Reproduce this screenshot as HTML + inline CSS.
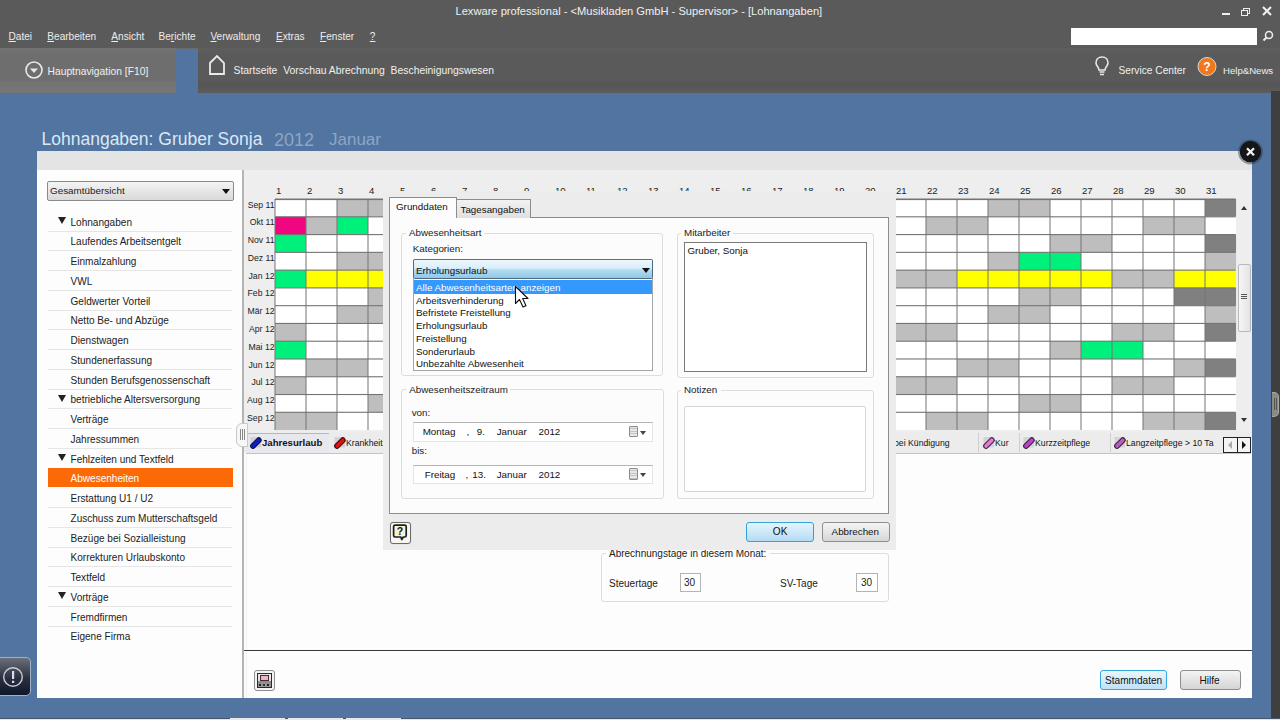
<!DOCTYPE html>
<html><head><meta charset="utf-8">
<style>
*{margin:0;padding:0;box-sizing:border-box}
html,body{width:1280px;height:720px;overflow:hidden}
body{position:relative;background:#5274a0;font-family:"Liberation Sans",sans-serif;font-size:10px;color:#1e1e1e}
.a{position:absolute}
.t{position:absolute;white-space:nowrap;line-height:1}
/* top bars */
#titlebar{left:0;top:0;width:1280px;height:48px;background:#5a5a5a}
#nav1{left:0;top:48px;width:176px;height:45px;background:linear-gradient(#727272,#6e6e6e 15%,#6e6e6e 74%,#747474 75%,#767676)}
#nav2{left:198px;top:48px;width:1082px;height:45px;background:linear-gradient(#5e5e5e,#5a5a5a 15%,#5a5a5a 74%,#555 80%,#5c5c5c)}
.menu{top:32px;font-size:10.1px;color:#ececec}
.menu u{text-decoration:underline;text-underline-offset:1px}
/* main panel */
#panel{left:36.8px;top:151px;width:1215.2px;height:547px;background:#fdfdfd}
#pstrip{left:36.8px;top:151px;width:1215.2px;height:18.8px;background:#e4e4e4}
#calbg{left:244px;top:170px;width:1008px;height:283px;background:#eeeeee}
#split{left:242.2px;top:170px;width:2px;height:528px;background:#b4b4b4;box-shadow:3.5px 0 0 -0.5px #f0f0f0}
.side{left:70.5px;font-size:10.05px;color:#222}
.sep{left:48px;width:184px;height:1px;background:#e6e6e6}
.tri{left:58px;width:0;height:0;border-left:4px solid transparent;border-right:4px solid transparent;border-top:7px solid #222}
.ml{position:absolute;left:240px;width:34.6px;text-align:right;font-size:8.7px;line-height:1;color:#222;white-space:nowrap}
.dn{position:absolute;top:186px;font-size:9.6px;line-height:1;color:#222}
.dl{left:416px;font-size:9.8px;color:#111}
.dt{font-size:9.8px;color:#111}
.calic{left:628.5px;width:9.5px;height:11.5px;border:1px solid #8c8c8c;border-radius:1px;background:repeating-linear-gradient(#e8e8e8 0,#e8e8e8 1.5px,#c4c4c4 1.5px,#c4c4c4 2.5px)}
.calar{left:640px;width:0;height:0;border-left:3.5px solid transparent;border-right:3.5px solid transparent;border-top:4px solid #444}
</style></head><body>
<!-- title & menu -->
<div id="titlebar" class="a"></div>
<div class="a" style="left:0;top:47.5px;width:1280px;height:1px;background:#6a6a6a"></div>
<div class="t" style="left:455.5px;top:5.5px;font-size:11.13px;color:#f0f0f0">Lexware professional - &lt;Musikladen GmbH - Supervisor&gt; - [Lohnangaben]</div>
<div class="t menu" style="left:8.5px"><u>D</u>atei</div>
<div class="t menu" style="left:47.3px"><u>B</u>earbeiten</div>
<div class="t menu" style="left:111.3px"><u>A</u>nsicht</div>
<div class="t menu" style="left:158.5px">Be<u>r</u>ichte</div>
<div class="t menu" style="left:210.4px"><u>V</u>erwaltung</div>
<div class="t menu" style="left:276px"><u>E</u>xtras</div>
<div class="t menu" style="left:320px"><u>F</u>enster</div>
<div class="t menu" style="left:369.8px"><u>?</u></div>
<!-- window controls -->
<div class="a" style="left:1222px;top:13px;width:8px;height:2px;background:#eee"></div>
<div class="a" style="left:1243px;top:8px;width:7px;height:6px;border:1.5px solid #eee"></div>
<div class="a" style="left:1241px;top:10px;width:7px;height:6px;border:1.5px solid #eee;background:#5a5a5a"></div>
<svg class="a" style="left:1262px;top:6px" width="10" height="10"><path d="M1 1L9 9M9 1L1 9" stroke="#f2f2f2" stroke-width="2"/></svg>
<!-- search -->
<div class="a" style="left:1071px;top:27.5px;width:185.5px;height:17.5px;background:#fff"></div>
<svg class="a" style="left:1262px;top:30px" width="12" height="12"><circle cx="7" cy="5" r="3.5" fill="none" stroke="#eee" stroke-width="1.5"/><path d="M4.5 7.5L1.5 10.5" stroke="#eee" stroke-width="2"/></svg>
<!-- nav bar -->
<div id="nav1" class="a"></div>
<div id="nav2" class="a"></div>
<svg class="a" style="left:24px;top:60px" width="20" height="20"><circle cx="10" cy="10" r="8" fill="none" stroke="#e8e8e8" stroke-width="1.6"/><path d="M6 8.5L14 8.5L10 13Z" fill="#e8e8e8"/></svg>
<div class="t" style="left:47.5px;top:66.5px;font-size:10.3px;color:#f0f0f0">Hauptnavigation [F10]</div>
<svg class="a" style="left:208px;top:54px" width="18" height="22"><path d="M2 9L9 2L16 9L16 20L2 20Z" fill="none" stroke="#eaeaea" stroke-width="1.8"/></svg>
<div class="t" style="left:233.5px;top:66px;font-size:10.4px;color:#f0f0f0">Startseite&nbsp; Vorschau Abrechnung&nbsp; Bescheinigungswesen</div>
<svg class="a" style="left:1094px;top:55px" width="16" height="24"><path d="M8 2C4 2 2 5 2 8C2 11 5 12 5 15L11 15C11 12 14 11 14 8C14 5 12 2 8 2Z" fill="none" stroke="#e6e6e6" stroke-width="1.6"/><path d="M5.5 17L10.5 17M6 19.5L10 19.5" stroke="#e6e6e6" stroke-width="1.4"/></svg>
<div class="t" style="left:1118.5px;top:66px;font-size:10.2px;color:#f0f0f0">Service Center</div>
<svg class="a" style="left:1196px;top:56px" width="22" height="22"><circle cx="11" cy="10.5" r="9" fill="#f07818" stroke="#d8d8d8" stroke-width="1"/><text x="11" y="15" text-anchor="middle" font-family="Liberation Sans" font-weight="bold" font-size="12" fill="#fff">?</text></svg>
<div class="t" style="left:1223px;top:66px;font-size:9.6px;color:#f0f0f0">Help&amp;News</div>
<!-- right dark strip -->
<div class="a" style="left:1271px;top:91px;width:9px;height:629px;background:#3f3f3f"></div>
<div class="a" style="left:1271.5px;top:392px;width:7.5px;height:25px;border-radius:0 5px 5px 0;background:#8a8c84;border:1px solid #a8aaa0;border-left:none"></div>
<div class="a" style="left:1273.5px;top:398px;width:1px;height:12px;background:#555;box-shadow:2px 0 0 #555"></div>
<!-- page title -->
<div class="t" style="left:41.5px;top:130.5px;font-size:17.5px;color:#dbe8f6">Lohnangaben: Gruber Sonja</div>
<div class="t" style="left:274px;top:130.5px;font-size:18px;color:#8ea6c6">2012</div>
<div class="t" style="left:329px;top:130.5px;font-size:17px;color:#8ea6c6">Januar</div>
<!-- main panel -->
<div id="panel" class="a"></div>
<div id="pstrip" class="a"></div>
<div id="calbg" class="a"></div>
<div id="split" class="a"></div>
<!-- sidebar -->
<div class="a" style="left:47.2px;top:181.2px;width:186.8px;height:19.5px;border:1px solid #8a8a8a;border-radius:2px;background:linear-gradient(#f4f4f4,#e6e6e6 50%,#d9d9d9)"></div>
<div class="t" style="left:50px;top:186px;font-size:9.9px;color:#1a1a1a">Gesamtübersicht</div>
<div class="a" style="left:222px;top:188.5px;width:0;height:0;border-left:4px solid transparent;border-right:4px solid transparent;border-top:5px solid #111"></div>
<div class="t side" style="top:217.60px">Lohnangaben</div>
<div class="a tri" style="top:217.00px"></div>
<div class="a sep" style="top:230.50px"></div>
<div class="t side" style="top:237.35px">Laufendes Arbeitsentgelt</div>
<div class="a sep" style="top:250.25px"></div>
<div class="t side" style="top:257.10px">Einmalzahlung</div>
<div class="a sep" style="top:270.00px"></div>
<div class="t side" style="top:276.85px">VWL</div>
<div class="a sep" style="top:289.75px"></div>
<div class="t side" style="top:296.60px">Geldwerter Vorteil</div>
<div class="a sep" style="top:309.50px"></div>
<div class="t side" style="top:316.35px">Netto Be- und Abzüge</div>
<div class="a sep" style="top:329.25px"></div>
<div class="t side" style="top:336.10px">Dienstwagen</div>
<div class="a sep" style="top:349.00px"></div>
<div class="t side" style="top:355.85px">Stundenerfassung</div>
<div class="a sep" style="top:368.75px"></div>
<div class="t side" style="top:375.60px">Stunden Berufsgenossenschaft</div>
<div class="a sep" style="top:388.50px"></div>
<div class="t side" style="top:395.35px">betriebliche Altersversorgung</div>
<div class="a tri" style="top:394.75px"></div>
<div class="a sep" style="top:408.25px"></div>
<div class="t side" style="top:415.10px">Verträge</div>
<div class="a sep" style="top:428.00px"></div>
<div class="t side" style="top:434.85px">Jahressummen</div>
<div class="a sep" style="top:447.75px"></div>
<div class="t side" style="top:454.60px">Fehlzeiten und Textfeld</div>
<div class="a tri" style="top:454.00px"></div>
<div class="a" style="left:47.8px;top:467.95px;width:185.7px;height:19.5px;background:#fc6a08"></div>
<div class="t side" style="top:474.35px;color:#fff">Abwesenheiten</div>
<div class="t side" style="top:494.10px">Erstattung U1 / U2</div>
<div class="a sep" style="top:507.00px"></div>
<div class="t side" style="top:513.85px">Zuschuss zum Mutterschaftsgeld</div>
<div class="a sep" style="top:526.75px"></div>
<div class="t side" style="top:533.60px">Bezüge bei Sozialleistung</div>
<div class="a sep" style="top:546.50px"></div>
<div class="t side" style="top:553.35px">Korrekturen Urlaubskonto</div>
<div class="a sep" style="top:566.25px"></div>
<div class="t side" style="top:573.10px">Textfeld</div>
<div class="a sep" style="top:586.00px"></div>
<div class="t side" style="top:592.85px">Vorträge</div>
<div class="a tri" style="top:592.25px"></div>
<div class="a sep" style="top:605.75px"></div>
<div class="t side" style="top:612.60px">Fremdfirmen</div>
<div class="a sep" style="top:625.50px"></div>
<div class="t side" style="top:632.35px">Eigene Firma</div>
<!-- calendar -->
<svg style="position:absolute;left:0;top:0" width="1280" height="720" viewBox="0 0 1280 720">
<rect x="275.00" y="199.00" width="31.05" height="17.82" fill="#ffffff"/>
<rect x="306.00" y="199.00" width="31.05" height="17.82" fill="#ffffff"/>
<rect x="337.00" y="199.00" width="31.05" height="17.82" fill="#bebebe"/>
<rect x="368.00" y="199.00" width="31.05" height="17.82" fill="#bebebe"/>
<rect x="399.00" y="199.00" width="31.05" height="17.82" fill="#ffffff"/>
<rect x="430.00" y="199.00" width="31.05" height="17.82" fill="#ffffff"/>
<rect x="461.00" y="199.00" width="31.05" height="17.82" fill="#ffffff"/>
<rect x="492.00" y="199.00" width="31.05" height="17.82" fill="#ffffff"/>
<rect x="523.00" y="199.00" width="31.05" height="17.82" fill="#ffffff"/>
<rect x="554.00" y="199.00" width="31.05" height="17.82" fill="#bebebe"/>
<rect x="585.00" y="199.00" width="31.05" height="17.82" fill="#bebebe"/>
<rect x="616.00" y="199.00" width="31.05" height="17.82" fill="#ffffff"/>
<rect x="647.00" y="199.00" width="31.05" height="17.82" fill="#ffffff"/>
<rect x="678.00" y="199.00" width="31.05" height="17.82" fill="#ffffff"/>
<rect x="709.00" y="199.00" width="31.05" height="17.82" fill="#ffffff"/>
<rect x="740.00" y="199.00" width="31.05" height="17.82" fill="#ffffff"/>
<rect x="771.00" y="199.00" width="31.05" height="17.82" fill="#bebebe"/>
<rect x="802.00" y="199.00" width="31.05" height="17.82" fill="#bebebe"/>
<rect x="833.00" y="199.00" width="31.05" height="17.82" fill="#ffffff"/>
<rect x="864.00" y="199.00" width="31.05" height="17.82" fill="#ffffff"/>
<rect x="895.00" y="199.00" width="31.05" height="17.82" fill="#ffffff"/>
<rect x="926.00" y="199.00" width="31.05" height="17.82" fill="#ffffff"/>
<rect x="957.00" y="199.00" width="31.05" height="17.82" fill="#ffffff"/>
<rect x="988.00" y="199.00" width="31.05" height="17.82" fill="#bebebe"/>
<rect x="1019.00" y="199.00" width="31.05" height="17.82" fill="#bebebe"/>
<rect x="1050.00" y="199.00" width="31.05" height="17.82" fill="#ffffff"/>
<rect x="1081.00" y="199.00" width="31.05" height="17.82" fill="#ffffff"/>
<rect x="1112.00" y="199.00" width="31.05" height="17.82" fill="#ffffff"/>
<rect x="1143.00" y="199.00" width="31.05" height="17.82" fill="#ffffff"/>
<rect x="1174.00" y="199.00" width="31.05" height="17.82" fill="#ffffff"/>
<rect x="1205.00" y="199.00" width="31.05" height="17.82" fill="#808080"/>
<rect x="275.00" y="216.77" width="31.05" height="17.82" fill="#f0067e"/>
<rect x="306.00" y="216.77" width="31.05" height="17.82" fill="#bebebe"/>
<rect x="337.00" y="216.77" width="31.05" height="17.82" fill="#00f07c"/>
<rect x="368.00" y="216.77" width="31.05" height="17.82" fill="#ffffff"/>
<rect x="399.00" y="216.77" width="31.05" height="17.82" fill="#ffffff"/>
<rect x="430.00" y="216.77" width="31.05" height="17.82" fill="#ffffff"/>
<rect x="461.00" y="216.77" width="31.05" height="17.82" fill="#ffffff"/>
<rect x="492.00" y="216.77" width="31.05" height="17.82" fill="#bebebe"/>
<rect x="523.00" y="216.77" width="31.05" height="17.82" fill="#bebebe"/>
<rect x="554.00" y="216.77" width="31.05" height="17.82" fill="#ffffff"/>
<rect x="585.00" y="216.77" width="31.05" height="17.82" fill="#ffffff"/>
<rect x="616.00" y="216.77" width="31.05" height="17.82" fill="#ffffff"/>
<rect x="647.00" y="216.77" width="31.05" height="17.82" fill="#ffffff"/>
<rect x="678.00" y="216.77" width="31.05" height="17.82" fill="#ffffff"/>
<rect x="709.00" y="216.77" width="31.05" height="17.82" fill="#bebebe"/>
<rect x="740.00" y="216.77" width="31.05" height="17.82" fill="#bebebe"/>
<rect x="771.00" y="216.77" width="31.05" height="17.82" fill="#ffffff"/>
<rect x="802.00" y="216.77" width="31.05" height="17.82" fill="#ffffff"/>
<rect x="833.00" y="216.77" width="31.05" height="17.82" fill="#ffffff"/>
<rect x="864.00" y="216.77" width="31.05" height="17.82" fill="#ffffff"/>
<rect x="895.00" y="216.77" width="31.05" height="17.82" fill="#ffffff"/>
<rect x="926.00" y="216.77" width="31.05" height="17.82" fill="#bebebe"/>
<rect x="957.00" y="216.77" width="31.05" height="17.82" fill="#bebebe"/>
<rect x="988.00" y="216.77" width="31.05" height="17.82" fill="#ffffff"/>
<rect x="1019.00" y="216.77" width="31.05" height="17.82" fill="#ffffff"/>
<rect x="1050.00" y="216.77" width="31.05" height="17.82" fill="#ffffff"/>
<rect x="1081.00" y="216.77" width="31.05" height="17.82" fill="#ffffff"/>
<rect x="1112.00" y="216.77" width="31.05" height="17.82" fill="#ffffff"/>
<rect x="1143.00" y="216.77" width="31.05" height="17.82" fill="#bebebe"/>
<rect x="1174.00" y="216.77" width="31.05" height="17.82" fill="#bebebe"/>
<rect x="1205.00" y="216.77" width="31.05" height="17.82" fill="#ffffff"/>
<rect x="275.00" y="234.54" width="31.05" height="17.82" fill="#00f07c"/>
<rect x="306.00" y="234.54" width="31.05" height="17.82" fill="#ffffff"/>
<rect x="337.00" y="234.54" width="31.05" height="17.82" fill="#ffffff"/>
<rect x="368.00" y="234.54" width="31.05" height="17.82" fill="#ffffff"/>
<rect x="399.00" y="234.54" width="31.05" height="17.82" fill="#bebebe"/>
<rect x="430.00" y="234.54" width="31.05" height="17.82" fill="#bebebe"/>
<rect x="461.00" y="234.54" width="31.05" height="17.82" fill="#ffffff"/>
<rect x="492.00" y="234.54" width="31.05" height="17.82" fill="#ffffff"/>
<rect x="523.00" y="234.54" width="31.05" height="17.82" fill="#ffffff"/>
<rect x="554.00" y="234.54" width="31.05" height="17.82" fill="#ffffff"/>
<rect x="585.00" y="234.54" width="31.05" height="17.82" fill="#ffffff"/>
<rect x="616.00" y="234.54" width="31.05" height="17.82" fill="#bebebe"/>
<rect x="647.00" y="234.54" width="31.05" height="17.82" fill="#bebebe"/>
<rect x="678.00" y="234.54" width="31.05" height="17.82" fill="#ffffff"/>
<rect x="709.00" y="234.54" width="31.05" height="17.82" fill="#ffffff"/>
<rect x="740.00" y="234.54" width="31.05" height="17.82" fill="#ffffff"/>
<rect x="771.00" y="234.54" width="31.05" height="17.82" fill="#ffffff"/>
<rect x="802.00" y="234.54" width="31.05" height="17.82" fill="#ffffff"/>
<rect x="833.00" y="234.54" width="31.05" height="17.82" fill="#bebebe"/>
<rect x="864.00" y="234.54" width="31.05" height="17.82" fill="#bebebe"/>
<rect x="895.00" y="234.54" width="31.05" height="17.82" fill="#ffffff"/>
<rect x="926.00" y="234.54" width="31.05" height="17.82" fill="#ffffff"/>
<rect x="957.00" y="234.54" width="31.05" height="17.82" fill="#ffffff"/>
<rect x="988.00" y="234.54" width="31.05" height="17.82" fill="#ffffff"/>
<rect x="1019.00" y="234.54" width="31.05" height="17.82" fill="#ffffff"/>
<rect x="1050.00" y="234.54" width="31.05" height="17.82" fill="#bebebe"/>
<rect x="1081.00" y="234.54" width="31.05" height="17.82" fill="#bebebe"/>
<rect x="1112.00" y="234.54" width="31.05" height="17.82" fill="#ffffff"/>
<rect x="1143.00" y="234.54" width="31.05" height="17.82" fill="#ffffff"/>
<rect x="1174.00" y="234.54" width="31.05" height="17.82" fill="#ffffff"/>
<rect x="1205.00" y="234.54" width="31.05" height="17.82" fill="#808080"/>
<rect x="275.00" y="252.31" width="31.05" height="17.82" fill="#ffffff"/>
<rect x="306.00" y="252.31" width="31.05" height="17.82" fill="#ffffff"/>
<rect x="337.00" y="252.31" width="31.05" height="17.82" fill="#bebebe"/>
<rect x="368.00" y="252.31" width="31.05" height="17.82" fill="#bebebe"/>
<rect x="399.00" y="252.31" width="31.05" height="17.82" fill="#ffffff"/>
<rect x="430.00" y="252.31" width="31.05" height="17.82" fill="#ffffff"/>
<rect x="461.00" y="252.31" width="31.05" height="17.82" fill="#ffffff"/>
<rect x="492.00" y="252.31" width="31.05" height="17.82" fill="#ffffff"/>
<rect x="523.00" y="252.31" width="31.05" height="17.82" fill="#ffffff"/>
<rect x="554.00" y="252.31" width="31.05" height="17.82" fill="#bebebe"/>
<rect x="585.00" y="252.31" width="31.05" height="17.82" fill="#bebebe"/>
<rect x="616.00" y="252.31" width="31.05" height="17.82" fill="#ffffff"/>
<rect x="647.00" y="252.31" width="31.05" height="17.82" fill="#ffffff"/>
<rect x="678.00" y="252.31" width="31.05" height="17.82" fill="#ffffff"/>
<rect x="709.00" y="252.31" width="31.05" height="17.82" fill="#ffffff"/>
<rect x="740.00" y="252.31" width="31.05" height="17.82" fill="#ffffff"/>
<rect x="771.00" y="252.31" width="31.05" height="17.82" fill="#bebebe"/>
<rect x="802.00" y="252.31" width="31.05" height="17.82" fill="#bebebe"/>
<rect x="833.00" y="252.31" width="31.05" height="17.82" fill="#ffffff"/>
<rect x="864.00" y="252.31" width="31.05" height="17.82" fill="#ffffff"/>
<rect x="895.00" y="252.31" width="31.05" height="17.82" fill="#ffffff"/>
<rect x="926.00" y="252.31" width="31.05" height="17.82" fill="#ffffff"/>
<rect x="957.00" y="252.31" width="31.05" height="17.82" fill="#ffffff"/>
<rect x="988.00" y="252.31" width="31.05" height="17.82" fill="#bebebe"/>
<rect x="1019.00" y="252.31" width="31.05" height="17.82" fill="#00f07c"/>
<rect x="1050.00" y="252.31" width="31.05" height="17.82" fill="#00f07c"/>
<rect x="1081.00" y="252.31" width="31.05" height="17.82" fill="#ffffff"/>
<rect x="1112.00" y="252.31" width="31.05" height="17.82" fill="#ffffff"/>
<rect x="1143.00" y="252.31" width="31.05" height="17.82" fill="#ffffff"/>
<rect x="1174.00" y="252.31" width="31.05" height="17.82" fill="#ffffff"/>
<rect x="1205.00" y="252.31" width="31.05" height="17.82" fill="#bebebe"/>
<rect x="275.00" y="270.08" width="31.05" height="17.82" fill="#00f07c"/>
<rect x="306.00" y="270.08" width="31.05" height="17.82" fill="#ffff00"/>
<rect x="337.00" y="270.08" width="31.05" height="17.82" fill="#ffff00"/>
<rect x="368.00" y="270.08" width="31.05" height="17.82" fill="#ffff00"/>
<rect x="399.00" y="270.08" width="31.05" height="17.82" fill="#ffff00"/>
<rect x="430.00" y="270.08" width="31.05" height="17.82" fill="#ffff00"/>
<rect x="461.00" y="270.08" width="31.05" height="17.82" fill="#bebebe"/>
<rect x="492.00" y="270.08" width="31.05" height="17.82" fill="#bebebe"/>
<rect x="523.00" y="270.08" width="31.05" height="17.82" fill="#ffff00"/>
<rect x="554.00" y="270.08" width="31.05" height="17.82" fill="#ffff00"/>
<rect x="585.00" y="270.08" width="31.05" height="17.82" fill="#ffff00"/>
<rect x="616.00" y="270.08" width="31.05" height="17.82" fill="#ffff00"/>
<rect x="647.00" y="270.08" width="31.05" height="17.82" fill="#ffff00"/>
<rect x="678.00" y="270.08" width="31.05" height="17.82" fill="#bebebe"/>
<rect x="709.00" y="270.08" width="31.05" height="17.82" fill="#bebebe"/>
<rect x="740.00" y="270.08" width="31.05" height="17.82" fill="#ffff00"/>
<rect x="771.00" y="270.08" width="31.05" height="17.82" fill="#ffff00"/>
<rect x="802.00" y="270.08" width="31.05" height="17.82" fill="#ffff00"/>
<rect x="833.00" y="270.08" width="31.05" height="17.82" fill="#ffff00"/>
<rect x="864.00" y="270.08" width="31.05" height="17.82" fill="#ffff00"/>
<rect x="895.00" y="270.08" width="31.05" height="17.82" fill="#bebebe"/>
<rect x="926.00" y="270.08" width="31.05" height="17.82" fill="#bebebe"/>
<rect x="957.00" y="270.08" width="31.05" height="17.82" fill="#ffff00"/>
<rect x="988.00" y="270.08" width="31.05" height="17.82" fill="#ffff00"/>
<rect x="1019.00" y="270.08" width="31.05" height="17.82" fill="#ffff00"/>
<rect x="1050.00" y="270.08" width="31.05" height="17.82" fill="#ffff00"/>
<rect x="1081.00" y="270.08" width="31.05" height="17.82" fill="#ffff00"/>
<rect x="1112.00" y="270.08" width="31.05" height="17.82" fill="#bebebe"/>
<rect x="1143.00" y="270.08" width="31.05" height="17.82" fill="#bebebe"/>
<rect x="1174.00" y="270.08" width="31.05" height="17.82" fill="#ffff00"/>
<rect x="1205.00" y="270.08" width="31.05" height="17.82" fill="#ffff00"/>
<rect x="275.00" y="287.85" width="31.05" height="17.82" fill="#ffffff"/>
<rect x="306.00" y="287.85" width="31.05" height="17.82" fill="#ffffff"/>
<rect x="337.00" y="287.85" width="31.05" height="17.82" fill="#ffffff"/>
<rect x="368.00" y="287.85" width="31.05" height="17.82" fill="#bebebe"/>
<rect x="399.00" y="287.85" width="31.05" height="17.82" fill="#bebebe"/>
<rect x="430.00" y="287.85" width="31.05" height="17.82" fill="#ffffff"/>
<rect x="461.00" y="287.85" width="31.05" height="17.82" fill="#ffffff"/>
<rect x="492.00" y="287.85" width="31.05" height="17.82" fill="#ffffff"/>
<rect x="523.00" y="287.85" width="31.05" height="17.82" fill="#ffffff"/>
<rect x="554.00" y="287.85" width="31.05" height="17.82" fill="#ffffff"/>
<rect x="585.00" y="287.85" width="31.05" height="17.82" fill="#bebebe"/>
<rect x="616.00" y="287.85" width="31.05" height="17.82" fill="#bebebe"/>
<rect x="647.00" y="287.85" width="31.05" height="17.82" fill="#ffffff"/>
<rect x="678.00" y="287.85" width="31.05" height="17.82" fill="#ffffff"/>
<rect x="709.00" y="287.85" width="31.05" height="17.82" fill="#ffffff"/>
<rect x="740.00" y="287.85" width="31.05" height="17.82" fill="#ffffff"/>
<rect x="771.00" y="287.85" width="31.05" height="17.82" fill="#ffffff"/>
<rect x="802.00" y="287.85" width="31.05" height="17.82" fill="#bebebe"/>
<rect x="833.00" y="287.85" width="31.05" height="17.82" fill="#bebebe"/>
<rect x="864.00" y="287.85" width="31.05" height="17.82" fill="#ffffff"/>
<rect x="895.00" y="287.85" width="31.05" height="17.82" fill="#ffffff"/>
<rect x="926.00" y="287.85" width="31.05" height="17.82" fill="#ffffff"/>
<rect x="957.00" y="287.85" width="31.05" height="17.82" fill="#ffffff"/>
<rect x="988.00" y="287.85" width="31.05" height="17.82" fill="#ffffff"/>
<rect x="1019.00" y="287.85" width="31.05" height="17.82" fill="#bebebe"/>
<rect x="1050.00" y="287.85" width="31.05" height="17.82" fill="#bebebe"/>
<rect x="1081.00" y="287.85" width="31.05" height="17.82" fill="#ffffff"/>
<rect x="1112.00" y="287.85" width="31.05" height="17.82" fill="#ffffff"/>
<rect x="1143.00" y="287.85" width="31.05" height="17.82" fill="#ffffff"/>
<rect x="1174.00" y="287.85" width="31.05" height="17.82" fill="#808080"/>
<rect x="1205.00" y="287.85" width="31.05" height="17.82" fill="#808080"/>
<rect x="275.00" y="305.62" width="31.05" height="17.82" fill="#ffffff"/>
<rect x="306.00" y="305.62" width="31.05" height="17.82" fill="#ffffff"/>
<rect x="337.00" y="305.62" width="31.05" height="17.82" fill="#bebebe"/>
<rect x="368.00" y="305.62" width="31.05" height="17.82" fill="#bebebe"/>
<rect x="399.00" y="305.62" width="31.05" height="17.82" fill="#ffffff"/>
<rect x="430.00" y="305.62" width="31.05" height="17.82" fill="#ffffff"/>
<rect x="461.00" y="305.62" width="31.05" height="17.82" fill="#ffffff"/>
<rect x="492.00" y="305.62" width="31.05" height="17.82" fill="#ffffff"/>
<rect x="523.00" y="305.62" width="31.05" height="17.82" fill="#ffffff"/>
<rect x="554.00" y="305.62" width="31.05" height="17.82" fill="#bebebe"/>
<rect x="585.00" y="305.62" width="31.05" height="17.82" fill="#bebebe"/>
<rect x="616.00" y="305.62" width="31.05" height="17.82" fill="#ffffff"/>
<rect x="647.00" y="305.62" width="31.05" height="17.82" fill="#ffffff"/>
<rect x="678.00" y="305.62" width="31.05" height="17.82" fill="#ffffff"/>
<rect x="709.00" y="305.62" width="31.05" height="17.82" fill="#ffffff"/>
<rect x="740.00" y="305.62" width="31.05" height="17.82" fill="#ffffff"/>
<rect x="771.00" y="305.62" width="31.05" height="17.82" fill="#bebebe"/>
<rect x="802.00" y="305.62" width="31.05" height="17.82" fill="#bebebe"/>
<rect x="833.00" y="305.62" width="31.05" height="17.82" fill="#ffffff"/>
<rect x="864.00" y="305.62" width="31.05" height="17.82" fill="#ffffff"/>
<rect x="895.00" y="305.62" width="31.05" height="17.82" fill="#ffffff"/>
<rect x="926.00" y="305.62" width="31.05" height="17.82" fill="#ffffff"/>
<rect x="957.00" y="305.62" width="31.05" height="17.82" fill="#ffffff"/>
<rect x="988.00" y="305.62" width="31.05" height="17.82" fill="#bebebe"/>
<rect x="1019.00" y="305.62" width="31.05" height="17.82" fill="#bebebe"/>
<rect x="1050.00" y="305.62" width="31.05" height="17.82" fill="#ffffff"/>
<rect x="1081.00" y="305.62" width="31.05" height="17.82" fill="#ffffff"/>
<rect x="1112.00" y="305.62" width="31.05" height="17.82" fill="#ffffff"/>
<rect x="1143.00" y="305.62" width="31.05" height="17.82" fill="#ffffff"/>
<rect x="1174.00" y="305.62" width="31.05" height="17.82" fill="#ffffff"/>
<rect x="1205.00" y="305.62" width="31.05" height="17.82" fill="#bebebe"/>
<rect x="275.00" y="323.39" width="31.05" height="17.82" fill="#bebebe"/>
<rect x="306.00" y="323.39" width="31.05" height="17.82" fill="#ffffff"/>
<rect x="337.00" y="323.39" width="31.05" height="17.82" fill="#ffffff"/>
<rect x="368.00" y="323.39" width="31.05" height="17.82" fill="#ffffff"/>
<rect x="399.00" y="323.39" width="31.05" height="17.82" fill="#ffffff"/>
<rect x="430.00" y="323.39" width="31.05" height="17.82" fill="#ffffff"/>
<rect x="461.00" y="323.39" width="31.05" height="17.82" fill="#bebebe"/>
<rect x="492.00" y="323.39" width="31.05" height="17.82" fill="#bebebe"/>
<rect x="523.00" y="323.39" width="31.05" height="17.82" fill="#ffffff"/>
<rect x="554.00" y="323.39" width="31.05" height="17.82" fill="#ffffff"/>
<rect x="585.00" y="323.39" width="31.05" height="17.82" fill="#ffffff"/>
<rect x="616.00" y="323.39" width="31.05" height="17.82" fill="#ffffff"/>
<rect x="647.00" y="323.39" width="31.05" height="17.82" fill="#ffffff"/>
<rect x="678.00" y="323.39" width="31.05" height="17.82" fill="#bebebe"/>
<rect x="709.00" y="323.39" width="31.05" height="17.82" fill="#bebebe"/>
<rect x="740.00" y="323.39" width="31.05" height="17.82" fill="#ffffff"/>
<rect x="771.00" y="323.39" width="31.05" height="17.82" fill="#ffffff"/>
<rect x="802.00" y="323.39" width="31.05" height="17.82" fill="#ffffff"/>
<rect x="833.00" y="323.39" width="31.05" height="17.82" fill="#ffffff"/>
<rect x="864.00" y="323.39" width="31.05" height="17.82" fill="#ffffff"/>
<rect x="895.00" y="323.39" width="31.05" height="17.82" fill="#bebebe"/>
<rect x="926.00" y="323.39" width="31.05" height="17.82" fill="#bebebe"/>
<rect x="957.00" y="323.39" width="31.05" height="17.82" fill="#ffffff"/>
<rect x="988.00" y="323.39" width="31.05" height="17.82" fill="#ffffff"/>
<rect x="1019.00" y="323.39" width="31.05" height="17.82" fill="#ffffff"/>
<rect x="1050.00" y="323.39" width="31.05" height="17.82" fill="#ffffff"/>
<rect x="1081.00" y="323.39" width="31.05" height="17.82" fill="#ffffff"/>
<rect x="1112.00" y="323.39" width="31.05" height="17.82" fill="#bebebe"/>
<rect x="1143.00" y="323.39" width="31.05" height="17.82" fill="#bebebe"/>
<rect x="1174.00" y="323.39" width="31.05" height="17.82" fill="#ffffff"/>
<rect x="1205.00" y="323.39" width="31.05" height="17.82" fill="#808080"/>
<rect x="275.00" y="341.16" width="31.05" height="17.82" fill="#00f07c"/>
<rect x="306.00" y="341.16" width="31.05" height="17.82" fill="#ffffff"/>
<rect x="337.00" y="341.16" width="31.05" height="17.82" fill="#ffffff"/>
<rect x="368.00" y="341.16" width="31.05" height="17.82" fill="#ffffff"/>
<rect x="399.00" y="341.16" width="31.05" height="17.82" fill="#bebebe"/>
<rect x="430.00" y="341.16" width="31.05" height="17.82" fill="#bebebe"/>
<rect x="461.00" y="341.16" width="31.05" height="17.82" fill="#ffffff"/>
<rect x="492.00" y="341.16" width="31.05" height="17.82" fill="#ffffff"/>
<rect x="523.00" y="341.16" width="31.05" height="17.82" fill="#ffffff"/>
<rect x="554.00" y="341.16" width="31.05" height="17.82" fill="#ffffff"/>
<rect x="585.00" y="341.16" width="31.05" height="17.82" fill="#ffffff"/>
<rect x="616.00" y="341.16" width="31.05" height="17.82" fill="#bebebe"/>
<rect x="647.00" y="341.16" width="31.05" height="17.82" fill="#bebebe"/>
<rect x="678.00" y="341.16" width="31.05" height="17.82" fill="#ffffff"/>
<rect x="709.00" y="341.16" width="31.05" height="17.82" fill="#ffffff"/>
<rect x="740.00" y="341.16" width="31.05" height="17.82" fill="#ffffff"/>
<rect x="771.00" y="341.16" width="31.05" height="17.82" fill="#ffffff"/>
<rect x="802.00" y="341.16" width="31.05" height="17.82" fill="#ffffff"/>
<rect x="833.00" y="341.16" width="31.05" height="17.82" fill="#bebebe"/>
<rect x="864.00" y="341.16" width="31.05" height="17.82" fill="#bebebe"/>
<rect x="895.00" y="341.16" width="31.05" height="17.82" fill="#ffffff"/>
<rect x="926.00" y="341.16" width="31.05" height="17.82" fill="#ffffff"/>
<rect x="957.00" y="341.16" width="31.05" height="17.82" fill="#ffffff"/>
<rect x="988.00" y="341.16" width="31.05" height="17.82" fill="#ffffff"/>
<rect x="1019.00" y="341.16" width="31.05" height="17.82" fill="#ffffff"/>
<rect x="1050.00" y="341.16" width="31.05" height="17.82" fill="#bebebe"/>
<rect x="1081.00" y="341.16" width="31.05" height="17.82" fill="#00f07c"/>
<rect x="1112.00" y="341.16" width="31.05" height="17.82" fill="#00f07c"/>
<rect x="1143.00" y="341.16" width="31.05" height="17.82" fill="#ffffff"/>
<rect x="1174.00" y="341.16" width="31.05" height="17.82" fill="#ffffff"/>
<rect x="1205.00" y="341.16" width="31.05" height="17.82" fill="#ffffff"/>
<rect x="275.00" y="358.93" width="31.05" height="17.82" fill="#ffffff"/>
<rect x="306.00" y="358.93" width="31.05" height="17.82" fill="#bebebe"/>
<rect x="337.00" y="358.93" width="31.05" height="17.82" fill="#bebebe"/>
<rect x="368.00" y="358.93" width="31.05" height="17.82" fill="#ffffff"/>
<rect x="399.00" y="358.93" width="31.05" height="17.82" fill="#ffffff"/>
<rect x="430.00" y="358.93" width="31.05" height="17.82" fill="#ffffff"/>
<rect x="461.00" y="358.93" width="31.05" height="17.82" fill="#ffffff"/>
<rect x="492.00" y="358.93" width="31.05" height="17.82" fill="#ffffff"/>
<rect x="523.00" y="358.93" width="31.05" height="17.82" fill="#bebebe"/>
<rect x="554.00" y="358.93" width="31.05" height="17.82" fill="#bebebe"/>
<rect x="585.00" y="358.93" width="31.05" height="17.82" fill="#ffffff"/>
<rect x="616.00" y="358.93" width="31.05" height="17.82" fill="#ffffff"/>
<rect x="647.00" y="358.93" width="31.05" height="17.82" fill="#ffffff"/>
<rect x="678.00" y="358.93" width="31.05" height="17.82" fill="#ffffff"/>
<rect x="709.00" y="358.93" width="31.05" height="17.82" fill="#ffffff"/>
<rect x="740.00" y="358.93" width="31.05" height="17.82" fill="#bebebe"/>
<rect x="771.00" y="358.93" width="31.05" height="17.82" fill="#bebebe"/>
<rect x="802.00" y="358.93" width="31.05" height="17.82" fill="#ffffff"/>
<rect x="833.00" y="358.93" width="31.05" height="17.82" fill="#ffffff"/>
<rect x="864.00" y="358.93" width="31.05" height="17.82" fill="#ffffff"/>
<rect x="895.00" y="358.93" width="31.05" height="17.82" fill="#ffffff"/>
<rect x="926.00" y="358.93" width="31.05" height="17.82" fill="#ffffff"/>
<rect x="957.00" y="358.93" width="31.05" height="17.82" fill="#bebebe"/>
<rect x="988.00" y="358.93" width="31.05" height="17.82" fill="#bebebe"/>
<rect x="1019.00" y="358.93" width="31.05" height="17.82" fill="#ffffff"/>
<rect x="1050.00" y="358.93" width="31.05" height="17.82" fill="#ffffff"/>
<rect x="1081.00" y="358.93" width="31.05" height="17.82" fill="#ffffff"/>
<rect x="1112.00" y="358.93" width="31.05" height="17.82" fill="#ffffff"/>
<rect x="1143.00" y="358.93" width="31.05" height="17.82" fill="#ffffff"/>
<rect x="1174.00" y="358.93" width="31.05" height="17.82" fill="#bebebe"/>
<rect x="1205.00" y="358.93" width="31.05" height="17.82" fill="#808080"/>
<rect x="275.00" y="376.70" width="31.05" height="17.82" fill="#bebebe"/>
<rect x="306.00" y="376.70" width="31.05" height="17.82" fill="#ffffff"/>
<rect x="337.00" y="376.70" width="31.05" height="17.82" fill="#ffffff"/>
<rect x="368.00" y="376.70" width="31.05" height="17.82" fill="#ffffff"/>
<rect x="399.00" y="376.70" width="31.05" height="17.82" fill="#ffffff"/>
<rect x="430.00" y="376.70" width="31.05" height="17.82" fill="#ffffff"/>
<rect x="461.00" y="376.70" width="31.05" height="17.82" fill="#bebebe"/>
<rect x="492.00" y="376.70" width="31.05" height="17.82" fill="#bebebe"/>
<rect x="523.00" y="376.70" width="31.05" height="17.82" fill="#ffffff"/>
<rect x="554.00" y="376.70" width="31.05" height="17.82" fill="#ffffff"/>
<rect x="585.00" y="376.70" width="31.05" height="17.82" fill="#ffffff"/>
<rect x="616.00" y="376.70" width="31.05" height="17.82" fill="#ffffff"/>
<rect x="647.00" y="376.70" width="31.05" height="17.82" fill="#ffffff"/>
<rect x="678.00" y="376.70" width="31.05" height="17.82" fill="#bebebe"/>
<rect x="709.00" y="376.70" width="31.05" height="17.82" fill="#bebebe"/>
<rect x="740.00" y="376.70" width="31.05" height="17.82" fill="#ffffff"/>
<rect x="771.00" y="376.70" width="31.05" height="17.82" fill="#ffffff"/>
<rect x="802.00" y="376.70" width="31.05" height="17.82" fill="#ffffff"/>
<rect x="833.00" y="376.70" width="31.05" height="17.82" fill="#ffffff"/>
<rect x="864.00" y="376.70" width="31.05" height="17.82" fill="#ffffff"/>
<rect x="895.00" y="376.70" width="31.05" height="17.82" fill="#bebebe"/>
<rect x="926.00" y="376.70" width="31.05" height="17.82" fill="#bebebe"/>
<rect x="957.00" y="376.70" width="31.05" height="17.82" fill="#ffffff"/>
<rect x="988.00" y="376.70" width="31.05" height="17.82" fill="#ffffff"/>
<rect x="1019.00" y="376.70" width="31.05" height="17.82" fill="#ffffff"/>
<rect x="1050.00" y="376.70" width="31.05" height="17.82" fill="#ffffff"/>
<rect x="1081.00" y="376.70" width="31.05" height="17.82" fill="#ffffff"/>
<rect x="1112.00" y="376.70" width="31.05" height="17.82" fill="#bebebe"/>
<rect x="1143.00" y="376.70" width="31.05" height="17.82" fill="#bebebe"/>
<rect x="1174.00" y="376.70" width="31.05" height="17.82" fill="#ffffff"/>
<rect x="1205.00" y="376.70" width="31.05" height="17.82" fill="#ffffff"/>
<rect x="275.00" y="394.47" width="31.05" height="17.82" fill="#ffffff"/>
<rect x="306.00" y="394.47" width="31.05" height="17.82" fill="#ffffff"/>
<rect x="337.00" y="394.47" width="31.05" height="17.82" fill="#ffffff"/>
<rect x="368.00" y="394.47" width="31.05" height="17.82" fill="#bebebe"/>
<rect x="399.00" y="394.47" width="31.05" height="17.82" fill="#bebebe"/>
<rect x="430.00" y="394.47" width="31.05" height="17.82" fill="#ffffff"/>
<rect x="461.00" y="394.47" width="31.05" height="17.82" fill="#ffffff"/>
<rect x="492.00" y="394.47" width="31.05" height="17.82" fill="#ffffff"/>
<rect x="523.00" y="394.47" width="31.05" height="17.82" fill="#ffffff"/>
<rect x="554.00" y="394.47" width="31.05" height="17.82" fill="#ffffff"/>
<rect x="585.00" y="394.47" width="31.05" height="17.82" fill="#bebebe"/>
<rect x="616.00" y="394.47" width="31.05" height="17.82" fill="#bebebe"/>
<rect x="647.00" y="394.47" width="31.05" height="17.82" fill="#ffffff"/>
<rect x="678.00" y="394.47" width="31.05" height="17.82" fill="#ffffff"/>
<rect x="709.00" y="394.47" width="31.05" height="17.82" fill="#ffffff"/>
<rect x="740.00" y="394.47" width="31.05" height="17.82" fill="#ffffff"/>
<rect x="771.00" y="394.47" width="31.05" height="17.82" fill="#ffffff"/>
<rect x="802.00" y="394.47" width="31.05" height="17.82" fill="#bebebe"/>
<rect x="833.00" y="394.47" width="31.05" height="17.82" fill="#bebebe"/>
<rect x="864.00" y="394.47" width="31.05" height="17.82" fill="#ffffff"/>
<rect x="895.00" y="394.47" width="31.05" height="17.82" fill="#ffffff"/>
<rect x="926.00" y="394.47" width="31.05" height="17.82" fill="#ffffff"/>
<rect x="957.00" y="394.47" width="31.05" height="17.82" fill="#ffffff"/>
<rect x="988.00" y="394.47" width="31.05" height="17.82" fill="#ffffff"/>
<rect x="1019.00" y="394.47" width="31.05" height="17.82" fill="#bebebe"/>
<rect x="1050.00" y="394.47" width="31.05" height="17.82" fill="#bebebe"/>
<rect x="1081.00" y="394.47" width="31.05" height="17.82" fill="#ffffff"/>
<rect x="1112.00" y="394.47" width="31.05" height="17.82" fill="#ffffff"/>
<rect x="1143.00" y="394.47" width="31.05" height="17.82" fill="#ffffff"/>
<rect x="1174.00" y="394.47" width="31.05" height="17.82" fill="#ffffff"/>
<rect x="1205.00" y="394.47" width="31.05" height="17.82" fill="#ffffff"/>
<rect x="275.00" y="412.24" width="31.05" height="17.82" fill="#bebebe"/>
<rect x="306.00" y="412.24" width="31.05" height="17.82" fill="#bebebe"/>
<rect x="337.00" y="412.24" width="31.05" height="17.82" fill="#ffffff"/>
<rect x="368.00" y="412.24" width="31.05" height="17.82" fill="#ffffff"/>
<rect x="399.00" y="412.24" width="31.05" height="17.82" fill="#ffffff"/>
<rect x="430.00" y="412.24" width="31.05" height="17.82" fill="#ffffff"/>
<rect x="461.00" y="412.24" width="31.05" height="17.82" fill="#ffffff"/>
<rect x="492.00" y="412.24" width="31.05" height="17.82" fill="#bebebe"/>
<rect x="523.00" y="412.24" width="31.05" height="17.82" fill="#bebebe"/>
<rect x="554.00" y="412.24" width="31.05" height="17.82" fill="#ffffff"/>
<rect x="585.00" y="412.24" width="31.05" height="17.82" fill="#ffffff"/>
<rect x="616.00" y="412.24" width="31.05" height="17.82" fill="#ffffff"/>
<rect x="647.00" y="412.24" width="31.05" height="17.82" fill="#ffffff"/>
<rect x="678.00" y="412.24" width="31.05" height="17.82" fill="#ffffff"/>
<rect x="709.00" y="412.24" width="31.05" height="17.82" fill="#bebebe"/>
<rect x="740.00" y="412.24" width="31.05" height="17.82" fill="#bebebe"/>
<rect x="771.00" y="412.24" width="31.05" height="17.82" fill="#ffffff"/>
<rect x="802.00" y="412.24" width="31.05" height="17.82" fill="#ffffff"/>
<rect x="833.00" y="412.24" width="31.05" height="17.82" fill="#ffffff"/>
<rect x="864.00" y="412.24" width="31.05" height="17.82" fill="#ffffff"/>
<rect x="895.00" y="412.24" width="31.05" height="17.82" fill="#ffffff"/>
<rect x="926.00" y="412.24" width="31.05" height="17.82" fill="#bebebe"/>
<rect x="957.00" y="412.24" width="31.05" height="17.82" fill="#bebebe"/>
<rect x="988.00" y="412.24" width="31.05" height="17.82" fill="#ffffff"/>
<rect x="1019.00" y="412.24" width="31.05" height="17.82" fill="#ffffff"/>
<rect x="1050.00" y="412.24" width="31.05" height="17.82" fill="#ffffff"/>
<rect x="1081.00" y="412.24" width="31.05" height="17.82" fill="#ffffff"/>
<rect x="1112.00" y="412.24" width="31.05" height="17.82" fill="#ffffff"/>
<rect x="1143.00" y="412.24" width="31.05" height="17.82" fill="#bebebe"/>
<rect x="1174.00" y="412.24" width="31.05" height="17.82" fill="#bebebe"/>
<rect x="1205.00" y="412.24" width="31.05" height="17.82" fill="#808080"/>
<rect x="274.50" y="199.00" width="1.0" height="231.01" fill="#747474"/>
<rect x="305.50" y="199.00" width="1.0" height="231.01" fill="#747474"/>
<rect x="336.50" y="199.00" width="1.0" height="231.01" fill="#747474"/>
<rect x="367.50" y="199.00" width="1.0" height="231.01" fill="#747474"/>
<rect x="398.50" y="199.00" width="1.0" height="231.01" fill="#747474"/>
<rect x="429.50" y="199.00" width="1.0" height="231.01" fill="#747474"/>
<rect x="460.50" y="199.00" width="1.0" height="231.01" fill="#747474"/>
<rect x="491.50" y="199.00" width="1.0" height="231.01" fill="#747474"/>
<rect x="522.50" y="199.00" width="1.0" height="231.01" fill="#747474"/>
<rect x="553.50" y="199.00" width="1.0" height="231.01" fill="#747474"/>
<rect x="584.50" y="199.00" width="1.0" height="231.01" fill="#747474"/>
<rect x="615.50" y="199.00" width="1.0" height="231.01" fill="#747474"/>
<rect x="646.50" y="199.00" width="1.0" height="231.01" fill="#747474"/>
<rect x="677.50" y="199.00" width="1.0" height="231.01" fill="#747474"/>
<rect x="708.50" y="199.00" width="1.0" height="231.01" fill="#747474"/>
<rect x="739.50" y="199.00" width="1.0" height="231.01" fill="#747474"/>
<rect x="770.50" y="199.00" width="1.0" height="231.01" fill="#747474"/>
<rect x="801.50" y="199.00" width="1.0" height="231.01" fill="#747474"/>
<rect x="832.50" y="199.00" width="1.0" height="231.01" fill="#747474"/>
<rect x="863.50" y="199.00" width="1.0" height="231.01" fill="#747474"/>
<rect x="894.50" y="199.00" width="1.0" height="231.01" fill="#747474"/>
<rect x="925.50" y="199.00" width="1.0" height="231.01" fill="#747474"/>
<rect x="956.50" y="199.00" width="1.0" height="231.01" fill="#747474"/>
<rect x="987.50" y="199.00" width="1.0" height="231.01" fill="#747474"/>
<rect x="1018.50" y="199.00" width="1.0" height="231.01" fill="#747474"/>
<rect x="1049.50" y="199.00" width="1.0" height="231.01" fill="#747474"/>
<rect x="1080.50" y="199.00" width="1.0" height="231.01" fill="#747474"/>
<rect x="1111.50" y="199.00" width="1.0" height="231.01" fill="#747474"/>
<rect x="1142.50" y="199.00" width="1.0" height="231.01" fill="#747474"/>
<rect x="1173.50" y="199.00" width="1.0" height="231.01" fill="#747474"/>
<rect x="1204.50" y="199.00" width="1.0" height="231.01" fill="#747474"/>
<rect x="275.00" y="198.50" width="960.60" height="1.6" fill="#747474"/>
<rect x="275.00" y="216.27" width="960.60" height="1.1" fill="#747474"/>
<rect x="275.00" y="234.04" width="960.60" height="1.1" fill="#747474"/>
<rect x="275.00" y="251.81" width="960.60" height="1.1" fill="#747474"/>
<rect x="275.00" y="269.58" width="960.60" height="1.1" fill="#747474"/>
<rect x="275.00" y="287.35" width="960.60" height="1.1" fill="#747474"/>
<rect x="275.00" y="305.12" width="960.60" height="1.1" fill="#747474"/>
<rect x="275.00" y="322.89" width="960.60" height="1.1" fill="#747474"/>
<rect x="275.00" y="340.66" width="960.60" height="1.1" fill="#747474"/>
<rect x="275.00" y="358.43" width="960.60" height="1.1" fill="#747474"/>
<rect x="275.00" y="376.20" width="960.60" height="1.1" fill="#747474"/>
<rect x="275.00" y="393.97" width="960.60" height="1.1" fill="#747474"/>
<rect x="275.00" y="411.74" width="960.60" height="1.1" fill="#747474"/>
</svg>
<div class="ml" style="top:200.60px">Sep 11</div>
<div class="ml" style="top:218.37px">Okt 11</div>
<div class="ml" style="top:236.14px">Nov 11</div>
<div class="ml" style="top:253.91px">Dez 11</div>
<div class="ml" style="top:271.68px">Jan 12</div>
<div class="ml" style="top:289.45px">Feb 12</div>
<div class="ml" style="top:307.22px">Mär 12</div>
<div class="ml" style="top:324.99px">Apr 12</div>
<div class="ml" style="top:342.76px">Mai 12</div>
<div class="ml" style="top:360.53px">Jun 12</div>
<div class="ml" style="top:378.30px">Jul 12</div>
<div class="ml" style="top:396.07px">Aug 12</div>
<div class="ml" style="top:413.84px">Sep 12</div>
<div class="dn" style="left:276.00px">1</div>
<div class="dn" style="left:307.00px">2</div>
<div class="dn" style="left:338.00px">3</div>
<div class="dn" style="left:369.00px">4</div>
<div class="dn" style="left:400.00px">5</div>
<div class="dn" style="left:431.00px">6</div>
<div class="dn" style="left:462.00px">7</div>
<div class="dn" style="left:493.00px">8</div>
<div class="dn" style="left:524.00px">9</div>
<div class="dn" style="left:555.00px">10</div>
<div class="dn" style="left:586.00px">11</div>
<div class="dn" style="left:617.00px">12</div>
<div class="dn" style="left:648.00px">13</div>
<div class="dn" style="left:679.00px">14</div>
<div class="dn" style="left:710.00px">15</div>
<div class="dn" style="left:741.00px">16</div>
<div class="dn" style="left:772.00px">17</div>
<div class="dn" style="left:803.00px">18</div>
<div class="dn" style="left:834.00px">19</div>
<div class="dn" style="left:865.00px">20</div>
<div class="dn" style="left:896.00px">21</div>
<div class="dn" style="left:927.00px">22</div>
<div class="dn" style="left:958.00px">23</div>
<div class="dn" style="left:989.00px">24</div>
<div class="dn" style="left:1020.00px">25</div>
<div class="dn" style="left:1051.00px">26</div>
<div class="dn" style="left:1082.00px">27</div>
<div class="dn" style="left:1113.00px">28</div>
<div class="dn" style="left:1144.00px">29</div>
<div class="dn" style="left:1175.00px">30</div>
<div class="dn" style="left:1206.00px">31</div>
<!-- scrollbar -->
<div class="a" style="left:1237.5px;top:264px;width:13.2px;height:68px;border:1px solid #b9b9b9;border-radius:2px;background:linear-gradient(90deg,#f6f6f6,#e4e4e4)"></div>
<div class="a" style="left:1241px;top:294px;width:6px;height:1px;background:#555;box-shadow:0 2px 0 #555,0 4px 0 #555"></div>
<div class="a" style="left:1241px;top:206px;width:0;height:0;border-left:3.5px solid transparent;border-right:3.5px solid transparent;border-bottom:4px solid #333"></div>
<div class="a" style="left:1241px;top:418px;width:0;height:0;border-left:3.5px solid transparent;border-right:3.5px solid transparent;border-top:4px solid #333"></div>
<!-- legend bar -->
<div class="a" style="left:246px;top:432px;width:1005px;height:21.5px;background:#ececec;border-bottom:1.5px solid #c4c4c4"></div>
<div class="a" style="left:246px;top:432.5px;width:83px;height:20px;background:#e6e8ee;border-top:1.2px solid #b8b8b8"></div>
<svg class="a" style="left:249px;top:435px" width="14" height="14"><rect x="1.5" y="2" width="10.5" height="10.5" fill="#b8bcc0" opacity="0.5"/><path d="M4 11L9.8 5.2" stroke="#101040" stroke-width="5.8" stroke-linecap="round"/><path d="M4 11L9.8 5.2" stroke="#1020c0" stroke-width="3.6" stroke-linecap="round"/></svg>
<div class="t" style="left:262px;top:438px;font-size:9.6px;font-weight:bold;color:#111">Jahresurlaub</div>
<svg class="a" style="left:333px;top:435px" width="14" height="14"><rect x="1.5" y="2" width="10.5" height="10.5" fill="#b8bcc0" opacity="0.5"/><path d="M4 11L9.8 5.2" stroke="#301010" stroke-width="5.8" stroke-linecap="round"/><path d="M4 11L9.8 5.2" stroke="#e01010" stroke-width="3.6" stroke-linecap="round"/></svg>
<div class="t" style="left:346px;top:438.5px;font-size:8.7px;color:#111">Krankheit</div>
<div class="t" style="left:894px;top:438.5px;font-size:8.7px;color:#111">bei Kündigung</div>
<div class="a" style="left:978px;top:433px;width:1px;height:19px;background:#cfcfcf"></div>
<svg class="a" style="left:982px;top:435px" width="14" height="14"><rect x="1.5" y="2" width="10.5" height="10.5" fill="#b8bcc0" opacity="0.5"/><path d="M4 11L9.8 5.2" stroke="#502050" stroke-width="5.8" stroke-linecap="round"/><path d="M4 11L9.8 5.2" stroke="#e080d0" stroke-width="3.6" stroke-linecap="round"/></svg>
<div class="t" style="left:995px;top:438.5px;font-size:8.7px;color:#111">Kur</div>
<div class="a" style="left:1018.5px;top:433px;width:1px;height:19px;background:#cfcfcf"></div>
<svg class="a" style="left:1022px;top:435px" width="14" height="14"><rect x="1.5" y="2" width="10.5" height="10.5" fill="#b8bcc0" opacity="0.5"/><path d="M4 11L9.8 5.2" stroke="#402040" stroke-width="5.8" stroke-linecap="round"/><path d="M4 11L9.8 5.2" stroke="#c040d0" stroke-width="3.6" stroke-linecap="round"/></svg>
<div class="t" style="left:1035px;top:438.5px;font-size:8.7px;color:#111">Kurzzeitpflege</div>
<div class="a" style="left:1110px;top:433px;width:1px;height:19px;background:#cfcfcf"></div>
<svg class="a" style="left:1113px;top:435px" width="14" height="14"><rect x="1.5" y="2" width="10.5" height="10.5" fill="#b8bcc0" opacity="0.5"/><path d="M4 11L9.8 5.2" stroke="#402040" stroke-width="5.8" stroke-linecap="round"/><path d="M4 11L9.8 5.2" stroke="#b060c0" stroke-width="3.6" stroke-linecap="round"/></svg>
<div class="t" style="left:1126px;top:438.5px;font-size:8.7px;color:#111">Langzeitpflege &gt; 10 Ta</div>
<div class="a" style="left:1216px;top:433px;width:7px;height:19px;background:#ececec"></div>
<div class="a" style="left:1223px;top:436.5px;width:28px;height:16px;border:1.2px solid #222;background:#f4f4f4"></div>
<div class="a" style="left:1236.5px;top:437px;width:1px;height:15px;background:#222"></div>
<div class="a" style="left:1228px;top:441px;width:0;height:0;border-top:4px solid transparent;border-bottom:4px solid transparent;border-right:4px solid #aaa"></div>
<div class="a" style="left:1242px;top:441px;width:0;height:0;border-top:4px solid transparent;border-bottom:4px solid transparent;border-left:4px solid #111"></div>
<!-- splitter handle -->
<div class="a" style="left:236px;top:423px;width:12px;height:24px;border:1px solid #c8c8c8;border-radius:6px 0 0 6px;background:#f7f7f7"></div>
<div class="a" style="left:239.5px;top:429px;width:1px;height:11px;background:#888;box-shadow:2px 0 0 #888,4px 0 0 #888"></div>
<!-- Abrechnungstage group -->
<div class="a" style="left:601px;top:553px;width:288px;height:49px;border:1px solid #dcdcdc;border-radius:3px"></div>
<div class="a" style="left:606px;top:548px;width:164px;height:10px;background:#fdfdfd"></div>
<div class="t" style="left:609px;top:549px;font-size:10px;color:#222">Abrechnungstage in diesem Monat:</div>
<div class="t" style="left:609px;top:579px;font-size:10px;color:#222">Steuertage</div>
<div class="a" style="left:679.6px;top:573.4px;width:21px;height:18.6px;border:1px solid #b4b4b4;background:#fff"></div>
<div class="t" style="left:684px;top:578px;font-size:10px;color:#222">30</div>
<div class="t" style="left:780px;top:579px;font-size:10px;color:#222">SV-Tage</div>
<div class="a" style="left:856px;top:573.4px;width:21.7px;height:18.6px;border:1px solid #b4b4b4;background:#fff"></div>
<div class="t" style="left:861px;top:578px;font-size:10px;color:#222">30</div>
<!-- bottom toolbar -->
<div class="a" style="left:244px;top:649.5px;width:1008px;height:1.5px;background:#3a3a3a"></div>
<div class="a" style="left:254px;top:669.5px;width:21px;height:21px;border:1.8px solid #8e8e8e;border-radius:3px;background:#f4f4f4"></div>
<div class="a" style="left:256.7px;top:672.6px;width:15.2px;height:15.2px;border:1.5px solid #2a2a2a;background:linear-gradient(#e8e4e8 0,#e8e4e8 55%,#8c8c8c 55%,#9a9a9a)"></div>
<div class="a" style="left:259.5px;top:675px;width:9.5px;height:6px;border:1.2px solid #4a2a30;background:#e8b8c4"></div>
<div class="a" style="left:259px;top:684px;width:2px;height:2px;background:#222;box-shadow:4px 0 0 #333,8px 0 0 #222"></div>
<div class="a" style="left:1100px;top:670px;width:67px;height:20px;border:1.6px solid #35a6e0;border-radius:3px;background:linear-gradient(#eaf6fd,#d6ecfa 50%,#bfe1f7)"></div>
<div class="t" style="left:1105px;top:676px;font-size:10.1px;color:#111">Stammdaten</div>
<div class="a" style="left:1180px;top:670px;width:60.5px;height:20px;border:1px solid #8e8e8e;border-radius:3px;background:linear-gradient(#f4f4f4,#e4e4e4 50%,#d4d4d4)"></div>
<div class="t" style="left:1199.5px;top:676px;font-size:10.1px;color:#111">Hilfe</div>
<!-- info box -->
<div class="a" style="left:-6px;top:657px;width:36.5px;height:38.5px;border:1.5px solid #9fb2ca;border-radius:5px;background:linear-gradient(#6c6f78,#2a3040 55%,#0e1628)"></div>
<svg class="a" style="left:2px;top:666px" width="22" height="22"><circle cx="11" cy="11" r="9.3" fill="none" stroke="#c8ccd4" stroke-width="1.4"/><rect x="10" y="5" width="2.2" height="8" fill="#dde"/><rect x="10" y="14.8" width="2.2" height="2.2" fill="#dde"/></svg>
<!-- close button -->
<svg class="a" style="left:1236px;top:138px" width="30" height="30"><circle cx="14.5" cy="14" r="12.5" fill="#2a3446" opacity="0.45"/><circle cx="14.5" cy="13.7" r="10.6" fill="#151618"/><path d="M11 10.2L18 17.2M18 10.2L11 17.2" stroke="#f2f2f2" stroke-width="2.3"/></svg>
<!-- bottom taskbar fragment -->
<div class="a" style="left:0;top:717.5px;width:1280px;height:1px;background:#46566c"></div><div class="a" style="left:0;top:718.5px;width:1280px;height:1.5px;background:#dfe5ea"></div>
<div class="a" style="left:230px;top:718px;width:55px;height:2px;background:#e8e8e8"></div>
<div class="a" style="left:288px;top:718px;width:55px;height:2px;background:#e8e8e8"></div>
<div class="a" style="left:346px;top:718px;width:55px;height:2px;background:#e8e8e8"></div>
<!-- ===== dialog ===== -->
<div class="a" style="left:383.3px;top:191px;width:512.7px;height:359px;background:#ececec"></div>
<!-- tab panel -->
<div class="a" style="left:389.2px;top:217px;width:499.6px;height:296.5px;background:#fcfcfc;border:1px solid #8c8c8c"></div>
<!-- tabs -->
<div class="a" style="left:456.4px;top:198.8px;width:74.4px;height:19px;border:1px solid #8c8c8c;border-bottom:none;background:linear-gradient(#f2f2f2,#e0e0e0)"></div>
<div class="a" style="left:389.2px;top:196.6px;width:67.5px;height:21.4px;border:1px solid #8c8c8c;border-bottom:none;background:#fcfcfc"></div>
<div class="t" style="left:396px;top:202px;font-size:9.8px;color:#111">Grunddaten</div>
<div class="t" style="left:460.5px;top:204.5px;font-size:9.8px;color:#111">Tagesangaben</div>
<!-- group Abwesenheitsart -->
<div class="a" style="left:400.8px;top:232.5px;width:262.5px;height:143.5px;border:1px solid #dcdcdc;border-radius:3px"></div>
<div class="a" style="left:406px;top:228px;width:78px;height:9px;background:#fcfcfc"></div>
<div class="t" style="left:409px;top:228px;font-size:9.8px;color:#222">Abwesenheitsart</div>
<div class="t" style="left:412.8px;top:244px;font-size:9.8px;color:#222">Kategorien:</div>
<!-- combo -->
<div class="a" style="left:412.8px;top:259.3px;width:240px;height:20.2px;border:1px solid #4f6a80;border-top-color:#5a7080;border-radius:2px;background:linear-gradient(#eef7fc,#d8eefa 45%,#b4dcf2 55%,#90c8e6)"></div>
<div class="t" style="left:416px;top:265.5px;font-size:9.8px;color:#111">Erholungsurlaub</div>
<div class="a" style="left:641.5px;top:268px;width:0;height:0;border-left:4px solid transparent;border-right:4px solid transparent;border-top:5px solid #111"></div>
<!-- dropdown list -->
<div class="a" style="left:412.8px;top:279.4px;width:240px;height:92px;border:1px solid #a4a4a4;border-top:none;background:#fff"></div>
<div class="a" style="left:413.5px;top:279.5px;width:238.6px;height:14px;background:#3399ff"></div>
<div class="t dl" style="top:283px;color:#fff">Alle Abwesenheitsarten anzeigen</div>
<div class="t dl" style="top:295.5px">Arbeitsverhinderung</div>
<div class="t dl" style="top:308.3px">Befristete Freistellung</div>
<div class="t dl" style="top:321px">Erholungsurlaub</div>
<div class="t dl" style="top:333.8px">Freistellung</div>
<div class="t dl" style="top:346.6px">Sonderurlaub</div>
<div class="t dl" style="top:359.4px">Unbezahlte Abwesenheit</div>
<!-- cursor -->
<svg class="a" style="left:513.5px;top:285px" width="18" height="26"><path d="M1.5 1.5L1.5 18.5L5.5 14.5L9 22L12 20.8L8.7 13.5L14 13.5Z" fill="#fff" stroke="#111" stroke-width="1.1" stroke-linejoin="round"/></svg>
<!-- group Mitarbeiter -->
<div class="a" style="left:677px;top:232.5px;width:196.7px;height:145.2px;border:1px solid #dcdcdc;border-radius:3px"></div>
<div class="a" style="left:681px;top:228px;width:52px;height:9px;background:#fcfcfc"></div>
<div class="t" style="left:684px;top:228px;font-size:9.8px;color:#222">Mitarbeiter</div>
<div class="a" style="left:684.2px;top:241.8px;width:182.7px;height:130.6px;border:1px solid #7a7a7a;background:#fff"></div>
<div class="t" style="left:687.4px;top:245.5px;font-size:9.8px;color:#111">Gruber, Sonja</div>
<!-- group Abwesenheitszeitraum -->
<div class="a" style="left:401px;top:389px;width:262.7px;height:110.3px;border:1px solid #dcdcdc;border-radius:3px"></div>
<div class="a" style="left:406px;top:384px;width:104px;height:9px;background:#fcfcfc"></div>
<div class="t" style="left:409.3px;top:384.5px;font-size:9.8px;color:#222">Abwesenheitszeitraum</div>
<div class="t" style="left:411.7px;top:407.5px;font-size:9.8px;color:#222">von:</div>
<div class="a" style="left:412.5px;top:422px;width:240px;height:19.5px;border:1px solid #e4e4e4;border-top-color:#b4b4b4;background:#fff"></div>
<div class="t dt" style="top:427px;left:422.7px">Montag</div>
<div class="t dt" style="top:427px;left:466.5px">,</div>
<div class="t dt" style="top:427px;left:476.7px">9.</div>
<div class="t dt" style="top:427px;left:496.7px">Januar</div>
<div class="t dt" style="top:427px;left:538.5px">2012</div>
<div class="a calic" style="top:425.5px"></div>
<div class="a calar" style="top:430.5px"></div>
<div class="t" style="left:411.7px;top:446px;font-size:9.8px;color:#222">bis:</div>
<div class="a" style="left:412.5px;top:464.7px;width:240px;height:19.1px;border:1px solid #e4e4e4;border-top-color:#b4b4b4;background:#fff"></div>
<div class="t dt" style="top:470px;left:424.7px">Freitag</div>
<div class="t dt" style="top:470px;left:465.5px">,</div>
<div class="t dt" style="top:470px;left:472.3px">13.</div>
<div class="t dt" style="top:470px;left:496.7px">Januar</div>
<div class="t dt" style="top:470px;left:538.5px">2012</div>
<div class="a calic" style="top:468px"></div>
<div class="a calar" style="top:473px"></div>
<!-- group Notizen -->
<div class="a" style="left:677px;top:389.8px;width:196.7px;height:109.2px;border:1px solid #dcdcdc;border-radius:3px"></div>
<div class="a" style="left:681px;top:385px;width:40px;height:9px;background:#fcfcfc"></div>
<div class="t" style="left:684px;top:384.5px;font-size:9.8px;color:#222">Notizen</div>
<div class="a" style="left:684px;top:405.8px;width:181.8px;height:86.2px;border:1px solid #d6d6d6;border-radius:2px;background:#fff"></div>
<!-- bottom buttons -->
<div class="a" style="left:390px;top:522px;width:20.5px;height:21.5px;border:1.3px solid #6a6a6a;border-radius:3px;background:#f6f6f2;box-shadow:0 0 1px #bbb"></div>
<svg class="a" style="left:391px;top:523px" width="18" height="19"><path d="M4 2.2H13.8Q15.2 2.2 15.2 3.6V12.6Q15.2 14 13.8 14H12.3L10.8 16.6L9.8 14H4Q2.6 14 2.6 12.6V3.6Q2.6 2.2 4 2.2Z" fill="#f4f2d8" stroke="#1e1e1e" stroke-width="1.7" stroke-linejoin="round"/><text x="9" y="12" text-anchor="middle" font-family="Liberation Sans" font-weight="bold" font-size="10.5" fill="#111">?</text></svg>
<div class="a" style="left:746px;top:522px;width:68px;height:20px;border:1.6px solid #30a2dc;border-radius:3px;background:linear-gradient(#e6f4fc,#cde8f8 50%,#b4dbf4)"></div>
<div class="t" style="left:772.8px;top:527px;font-size:10.1px;color:#111">OK</div>
<div class="a" style="left:822px;top:522px;width:67.7px;height:20px;border:1px solid #8e8e8e;border-radius:3px;background:linear-gradient(#f4f4f4,#e6e6e6 50%,#d6d6d6)"></div>
<div class="t" style="left:831.6px;top:527px;font-size:9.8px;color:#111">Abbrechen</div>

</body></html>
